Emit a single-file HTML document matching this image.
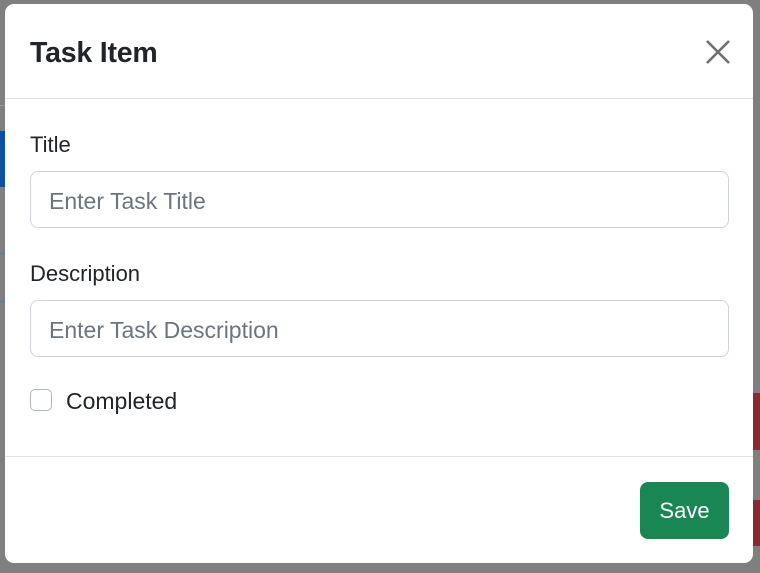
<!DOCTYPE html>
<html><head><meta charset="utf-8"><style>
html,body{margin:0;padding:0;width:760px;height:573px;overflow:hidden;background:#7f7f7f;font-family:"Liberation Sans",sans-serif;position:relative}
.bg{position:absolute}
.modal{position:absolute;left:5px;top:4px;width:748px;height:559px;background:#fff;border-radius:9px;overflow:hidden}
.hdr{position:absolute;left:0;top:0;width:100%;height:94px;border-bottom:1px solid #dee2e6}
.hdr h1{position:absolute;left:25px;top:33px;margin:0;font-size:28.5px;font-weight:bold;color:#212529;letter-spacing:-0.2px}
.lbl{position:absolute;left:25px;font-size:22px;color:#212529}
.inp{position:absolute;left:25px;width:699px;height:57px;border:1px solid #ced4da;border-radius:8px;box-sizing:border-box;font-size:23px;color:#6c757d;padding:16px 18px}
.foot{position:absolute;left:0;top:452px;width:100%;border-top:1px solid #dee2e6}
.btn{position:absolute;left:635px;top:478px;width:89px;height:57px;background:#198754;border-radius:8px;color:#fff;font-size:22px;text-align:center;line-height:57px}
.cb{position:absolute;left:25px;top:385px;width:22px;height:22px;border:1px solid #adb5bd;border-radius:5px;box-sizing:border-box}
</style></head><body>
<div class="bg" style="left:0;top:131px;width:5px;height:56px;background:#0d4fa0"></div>
<div class="bg" style="left:0;top:105px;width:5px;height:1px;background:#999"></div>
<div class="bg" style="left:0;top:253px;width:5px;height:1px;background:#3a8aa0"></div>
<div class="bg" style="left:0;top:301px;width:5px;height:1px;background:#3a8aa0"></div>
<div class="bg" style="left:753px;top:393px;width:7px;height:57px;background:#8a2a30"></div>
<div class="bg" style="left:753px;top:500px;width:7px;height:46px;background:#8a2a30"></div>
<div class="modal">
 <div class="hdr"><h1>Task Item</h1>
  <svg style="position:absolute;left:700px;top:35px" width="26" height="26" viewBox="0 0 26 26"><path d="M2 2L24 24M24 2L2 24" stroke="#6f6f6f" stroke-width="2.6" fill="none"/></svg>
 </div>
 <div class="lbl" style="top:128px">Title</div>
 <div class="inp" style="top:167px">Enter Task Title</div>
 <div class="lbl" style="top:257px">Description</div>
 <div class="inp" style="top:296px">Enter Task Description</div>
 <div class="cb"></div>
 <div class="lbl" style="left:61px;top:384px;font-size:23px">Completed</div>
 <div class="foot"></div>
 <div class="btn">Save</div>
</div>
</body></html>
